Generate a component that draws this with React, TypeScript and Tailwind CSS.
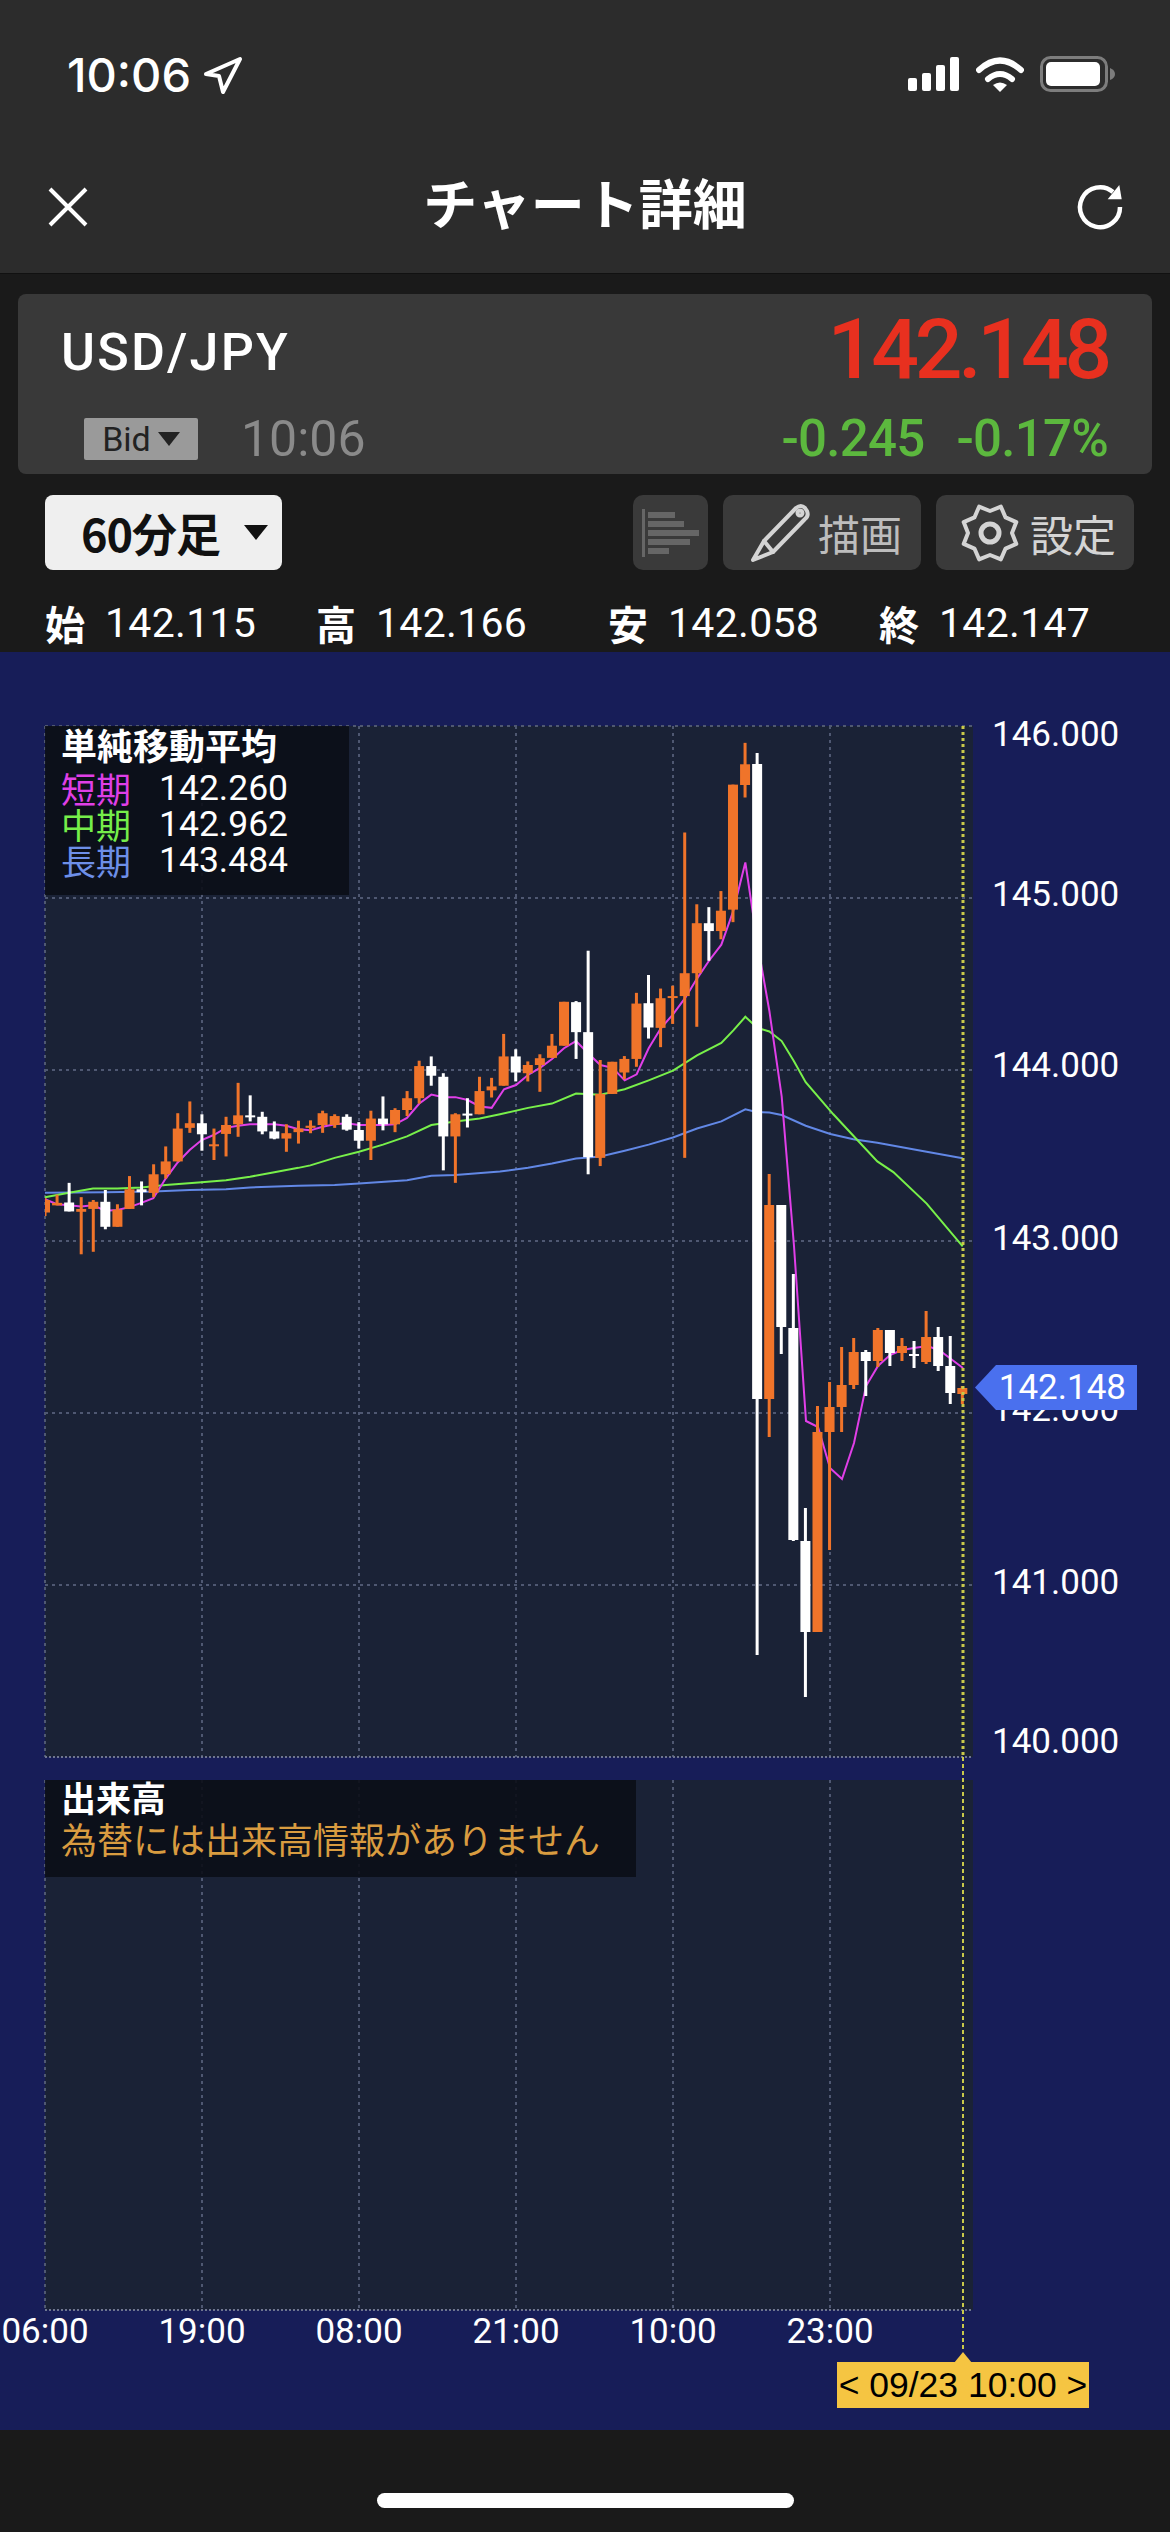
import React from 'react';

const SANS = "font-['Roboto','Noto_Sans_CJK_JP',sans-serif]";
const JP = "font-['Noto_Sans_CJK_JP',sans-serif]";

// candle data read off the chart, page coords: [white?, wickTop, bodyTop, bodyBottom, wickBottom]
type Candle = [number, number, number, number, number];
const z = (v: number) => 700 + v / 2.8;
const rawCandles: Candle[] = [
  [0, 1395, 1400, 1435, 1445], [0, 1385, 1408, 1415, 1415], [1, 1352, 1407, 1432, 1432], [0, 1392, 1425, 1433, 1552],
  [0, 1400, 1405, 1425, 1545], [1, 1372, 1405, 1475, 1482], [0, 1412, 1427, 1475, 1475], [0, 1333, 1370, 1425, 1425],
  [1, 1348, 1370, 1378, 1415], [0, 1300, 1328, 1380, 1392], [0, 1250, 1292, 1328, 1340], [0, 1157, 1200, 1292, 1292],
  [0, 1124, 1185, 1198, 1212], [1, 1160, 1185, 1216, 1262], [0, 1200, 1244, 1244, 1288], [0, 1167, 1190, 1215, 1278],
  [0, 1072, 1163, 1188, 1223], [1, 1107, 1163, 1166, 1180], [1, 1153, 1167, 1208, 1216], [1, 1180, 1208, 1228, 1230],
  [0, 1188, 1213, 1228, 1265], [0, 1178, 1200, 1210, 1242], [0, 1177, 1192, 1198, 1213], [0, 1150, 1157, 1190, 1212],
  [0, 1160, 1165, 1190, 1198], [1, 1160, 1167, 1203, 1206], [1, 1182, 1204, 1234, 1256], [0, 1150, 1172, 1234, 1288],
  [1, 1110, 1172, 1188, 1205], [0, 1143, 1148, 1188, 1210], [0, 1095, 1115, 1148, 1165], [0, 1010, 1025, 1115, 1130],
  [1, 998, 1025, 1052, 1080], [1, 1045, 1055, 1222, 1317], [0, 1157, 1160, 1222, 1352], [1, 1115, 1158, 1162, 1197],
  [0, 1055, 1095, 1160, 1160], [0, 1058, 1082, 1093, 1113], [0, 935, 998, 1080, 1080], [1, 978, 998, 1043, 1068],
  [0, 1012, 1022, 1045, 1068], [0, 992, 1003, 1022, 1097], [0, 935, 968, 1002, 1002], [0, 845, 845, 968, 968],
  [1, 843, 846, 930, 1005], [1, 702, 930, 1280, 1328], [0, 1008, 1103, 1282, 1305], [0, 1013, 1013, 1103, 1103],
  [0, 997, 1005, 1043, 1062], [0, 820, 850, 1005, 1027], [1, 770, 849, 917, 948], [0, 808, 835, 918, 972],
  [0, 800, 829, 833, 907], [0, 371, 765, 829, 1282], [0, 572, 625, 765, 915], [1, 580, 625, 647, 730],
  [0, 535, 590, 647, 670], [0, 237, 237, 587, 622], [0, 120, 180, 238, 273],
];
const candles: Candle[] = [
  ...rawCandles.map(([w, a, b, c, d]): Candle => [w, z(a), z(b), z(c), z(d)]),
  [1, 753, 764, 1399, 1655], [0, 1174, 1205, 1399, 1437], [1, 1205, 1205, 1327, 1354], [1, 1274, 1328, 1540, 1541],
  [1, 1508, 1541, 1632, 1697], [0, 1406, 1432, 1632, 1632], [0, 1382, 1407, 1432, 1550], [0, 1347, 1385, 1407, 1432],
  [0, 1338, 1352, 1385, 1389], [1, 1350, 1352, 1361, 1396], [0, 1328, 1330, 1361, 1367], [1, 1330, 1330, 1353, 1366],
  [0, 1338, 1346, 1353, 1361], [1, 1341, 1354, 1354, 1368], [0, 1311, 1337, 1362, 1364], [1, 1327, 1337, 1366, 1371],
  [1, 1336, 1366, 1393, 1404], [0, 1386, 1388, 1394, 1404],
];

const poly = (left: number[][], right: number[][], tail: number[][] = []) =>
  [
    ...left.map(([x, y]) => `${x / 3},${z(y)}`),
    ...right.map(([x, y]) => `${500 + x / 3},${z(y)}`),
    ...tail.map(([x, y]) => `${x},${y}`),
  ].join(' ');

const magenta = poly(
  [[135, 1398], [171, 1412], [207, 1415], [243, 1418], [279, 1415], [316, 1430], [352, 1428], [388, 1420], [424, 1408], [460, 1395], [497, 1340], [533, 1295], [569, 1260], [605, 1232], [641, 1218], [678, 1198], [714, 1192], [750, 1188], [787, 1188], [823, 1188], [859, 1192], [895, 1202], [931, 1205], [968, 1195], [1004, 1188], [1040, 1185], [1077, 1190], [1113, 1190], [1149, 1190], [1185, 1188], [1221, 1170], [1258, 1130], [1294, 1105], [1330, 1112], [1366, 1112], [1403, 1120], [1439, 1138], [1475, 1142]],
  [[12, 1090], [48, 1078], [84, 1050], [120, 1030], [156, 1005], [192, 975], [228, 955], [265, 990], [301, 1022], [338, 1030], [374, 1065], [410, 1048], [446, 975], [482, 920], [519, 880], [555, 835], [591, 780], [627, 730], [664, 685], [700, 590], [736, 455], [772, 680], [808, 870], [845, 1110]],
  [[794, 1246], [806, 1421], [818, 1427], [830, 1468], [842, 1479], [854, 1443], [866, 1386], [878, 1366], [890, 1355], [902, 1350], [914, 1348], [927, 1346], [939, 1350], [951, 1359], [963, 1368]],
);
const green = poly(
  [[135, 1392], [207, 1380], [279, 1368], [352, 1368], [424, 1365], [497, 1358], [605, 1350], [678, 1345], [750, 1335], [823, 1322], [895, 1310], [931, 1303], [1004, 1282], [1077, 1265], [1149, 1245], [1221, 1222], [1294, 1190], [1366, 1180], [1439, 1172]],
  [[0, 1160], [84, 1142], [156, 1130], [228, 1102], [301, 1105], [374, 1090], [446, 1065], [519, 1038], [591, 995], [664, 960], [700, 925], [736, 887], [772, 918], [808, 928], [845, 955], [881, 1010], [917, 1070], [1000, 1160], [1060, 1220], [1132, 1292], [1180, 1322], [1280, 1410], [1388, 1530]],
);
const blue = poly(
  [[135, 1380], [316, 1378], [460, 1376], [569, 1372], [678, 1370], [750, 1365], [895, 1360], [1004, 1358], [1077, 1354], [1221, 1345], [1294, 1332], [1366, 1330]],
  [[0, 1320], [84, 1310], [156, 1298], [228, 1284], [301, 1278], [374, 1262], [446, 1245], [519, 1225], [591, 1200], [664, 1180], [700, 1163], [736, 1146], [772, 1154], [808, 1155], [845, 1162], [917, 1192], [991, 1215], [1060, 1230], [1132, 1240], [1280, 1265], [1388, 1283]],
);

const gridX = [45, 202, 359, 516, 673, 830];
const gridY = [726, 898, 1070, 1241, 1413, 1585];
const axis = [
  ['146.000', 735], ['145.000', 895], ['144.000', 1066], ['143.000', 1239],
  ['142.000', 1410], ['141.000', 1583], ['140.000', 1742],
] as const;
const times = ['06:00', '19:00', '08:00', '21:00', '10:00', '23:00'];
const legend = [
  ['短期', '142.260', 'text-[#df3fe6]'],
  ['中期', '142.962', 'text-[#76ee4a]'],
  ['長期', '143.484', 'text-[#6d8fe8]'],
];
const ohlc = [
  ['始', '142.115', 'w-[271px]'],
  ['高', '142.166', 'w-[292px]'],
  ['安', '142.058', 'w-[271px]'],
  ['終', '142.147', ''],
];
const depthBars = [27, 36, 51, 42, 21];

function ChartLayer() {
  return (
    <svg className="absolute inset-0 z-10" width="1170" height="1778" viewBox="0 652 1170 1778">
      <defs>
        <clipPath id="plot">
          <rect x="45" y="726" width="928" height="1031" />
        </clipPath>
      </defs>
      <g stroke="#4f5872" strokeWidth="2" strokeDasharray="3 4" fill="none">
        {gridY.map((y) => (
          <line key={y} x1="45" x2="972" y1={y} y2={y} />
        ))}
        {gridX.map((x) => (
          <React.Fragment key={x}>
            <line x1={x} x2={x} y1="726" y2="1757" />
            <line x1={x} x2={x} y1="1780" y2="2310" />
          </React.Fragment>
        ))}
      </g>
      <g stroke="#6f7690" strokeWidth="2" strokeDasharray="2 2" fill="none">
        <line x1="45" x2="972" y1="1757" y2="1757" />
        <line x1="45" x2="972" y1="2310" y2="2310" />
      </g>
      <polyline points={blue} fill="none" stroke="#6288e6" strokeWidth="2" />
      <polyline points={green} fill="none" stroke="#78f04a" strokeWidth="2" />
      <polyline points={magenta} fill="none" stroke="#e03fe8" strokeWidth="2" />
      <g clipPath="url(#plot)">
        {candles.map(([w, top, bodyTop, bodyBottom, bottom], i) => {
          const x = 45 + i * 12.07;
          const color = w ? '#ffffff' : '#f0742a';
          return (
            <g key={i} fill={color}>
              <rect x={x - 1.5} y={top} width="3" height={bottom - top} />
              <rect x={x - 5} y={bodyTop} width="10" height={Math.max(bodyBottom - bodyTop, 2)} />
            </g>
          );
        })}
      </g>
      <line x1="963" x2="963" y1="726" y2="1757" stroke="#c9c94a" strokeWidth="3" strokeDasharray="3 3" />
      <line x1="963" x2="963" y1="1757" y2="2352" stroke="#c9c94a" strokeWidth="2" strokeDasharray="4 3" />
      <path d="M954 2363 L963 2352 L972 2363 Z" fill="#f5c542" />
    </svg>
  );
}

function Pencil() {
  return (
    <svg width="60" height="60" viewBox="0 0 60 60" fill="none" stroke="#d4d4d4" strokeWidth="4" strokeLinejoin="round" strokeLinecap="round">
      <path d="M3 57 L14 38 L46 5 Q51 1 55 5 L57 8 Q59 13 55 16 L23 49 Z" />
      <path d="M14 38 L23 49" />
      <circle cx="50" cy="10" r="2.5" />
    </svg>
  );
}

function Gear() {
  const pts: string[] = [];
  for (let i = 0; i < 16; i++) {
    const r = i % 2 === 0 ? 28.5 : 22;
    const a = ((i * 22.5 - 67.5) * Math.PI) / 180;
    pts.push(`${30 + r * Math.cos(a)},${30 + r * Math.sin(a)}`);
  }
  return (
    <svg width="60" height="60" viewBox="0 0 60 60" fill="none" stroke="#d4d4d4" strokeLinejoin="round">
      <polygon points={pts.join(' ')} strokeWidth="4" />
      <circle cx="30" cy="30" r="9" strokeWidth="5" />
    </svg>
  );
}

export default function App() {
  return (
    <div className={`w-[1170px] h-[2532px] flex flex-col overflow-hidden bg-[#1a1a1a] text-white ${SANS}`}>
      <header className="h-[274px] shrink-0 bg-[#2c2c2c] border-b border-[#111111] flex flex-col">
        {/* status bar */}
        <div className="h-[150px] flex items-start justify-between pt-[56px] pl-[67px] pr-[55px]">
          <div className="flex items-center h-[38px]">
            <span className="w-[136px] font-['Inter',sans-serif] font-medium text-[47px] leading-[38px]">10:06</span>
            <svg width="40" height="38" viewBox="0 0 40 38" fill="none" stroke="#ffffff" strokeWidth="4" strokeLinejoin="round">
              <path d="M3 18 L37 3 L20 36 L16 20 Z" />
            </svg>
          </div>
          <div className="flex items-start gap-[17px] h-[38px]">
            <svg width="51" height="36" viewBox="0 0 51 36" fill="#ffffff">
              <rect x="0" y="22" width="9" height="13" rx="2" />
              <rect x="14" y="17" width="9" height="18" rx="2" />
              <rect x="28" y="9" width="9" height="26" rx="2" />
              <rect x="42" y="1" width="9" height="34" rx="2" />
            </svg>
            <svg width="48" height="36" viewBox="0 0 48 36">
              <path d="M3 14 Q24 -5 45 14" fill="none" stroke="#ffffff" strokeWidth="6" strokeLinecap="round" />
              <path d="M12 23 Q24 13 36 23" fill="none" stroke="#ffffff" strokeWidth="6" strokeLinecap="round" />
              <path d="M17 29 Q24 24 31 29 L24 36 Z" fill="#ffffff" />
            </svg>
            <svg width="75" height="36" viewBox="0 0 75 36" className="-ml-[1px]">
              <rect x="1.5" y="1.5" width="65" height="33" rx="9" fill="none" stroke="#7d7d7d" strokeWidth="3" />
              <rect x="6" y="6" width="54" height="24" rx="5" fill="#ffffff" />
              <path d="M70 12 Q75 14 75 18 Q75 22 70 24 Z" fill="#7d7d7d" />
            </svg>
          </div>
        </div>
        {/* nav */}
        <div className="flex-1 flex items-start justify-between pl-[47px] pr-[45px]">
          <svg width="42" height="42" viewBox="0 0 42 42" className="mt-[36px]" stroke="#ffffff" strokeWidth="4">
            <path d="M3 3 L39 39 M39 3 L3 39" />
          </svg>
          <div className={`${JP} font-bold text-[54px] leading-[70px] mt-[17px] ml-[6px] text-center`}>チャート詳細</div>
          <svg width="50" height="50" viewBox="0 0 50 50" className="mt-[32px]">
            <path d="M45 25 A20 20 0 1 1 38 10" fill="none" stroke="#ffffff" strokeWidth="4.5" />
            <path d="M32.7 17.3 L46.7 17.3 L44.3 3 Z" fill="#ffffff" />
          </svg>
        </div>
      </header>

      <section className="mt-[20px] mx-[18px] h-[180px] shrink-0 bg-[#393939] rounded-[8px] flex flex-col pl-[43px] pr-[44px]">
        <div className="h-[124px] flex items-start justify-between">
          <span className="font-medium text-[52px] leading-[60px] mt-[29px] tracking-[2.2px]">USD/JPY</span>
          <span className="text-[#e8301f] font-medium text-[84px] leading-[90px] mt-[11px] tracking-[-4.2px]">142.148</span>
        </div>
        <div className="flex items-center justify-between h-[42px]">
          <div className="flex items-center">
            <div className="ml-[23px] w-[114px] h-[42px] bg-[#9a9a9a] flex items-center justify-center gap-[7px] rounded-[2px]">
              <span className="text-[#222222] text-[34px] leading-[42px]">Bid</span>
              <span className="w-0 h-0 border-x-[11px] border-x-transparent border-t-[14px] border-t-[#222222]" />
            </div>
            <span className="ml-[43px] text-[#8a8a8a] text-[50px] leading-[42px]">10:06</span>
          </div>
          <div className="flex items-center gap-[32px] text-[#5cb83e] font-medium text-[51px] leading-[42px] tracking-[-0.75px]">
            <span>-0.245</span>
            <span>-0.17%</span>
          </div>
        </div>
      </section>

      <div className="mt-[21px] h-[75px] shrink-0 flex items-stretch pl-[45px] pr-[36px]">
        <div className="w-[237px] bg-[#efefef] rounded-[8px] flex items-center text-[#111111] pl-[36px]">
          <span className={`${JP} font-bold text-[45px] leading-[60px] tracking-[-1px]`}>60分足</span>
          <span className="ml-[24px] w-0 h-0 border-x-[12px] border-x-transparent border-t-[15px] border-t-[#111111]" />
        </div>
        <div className="ml-auto w-[75px] bg-[#3a3a3a] rounded-[10px] flex items-center pl-[9px] gap-[3px]">
          <div className="w-[3px] h-[48px] bg-[#666666]" />
          <div className="flex flex-col gap-[3px]">
            {depthBars.map((w) => (
              <div key={w} className="h-[6px] bg-[#666666]" style={{ width: w }} />
            ))}
          </div>
        </div>
        <div className="ml-[15px] w-[198px] bg-[#3a3a3a] rounded-[10px] flex items-center pl-[27px] gap-[8px] text-[#bdbdbd]">
          <Pencil />
          <span className={`${JP} text-[42px] leading-[60px]`}>描画</span>
        </div>
        <div className="ml-[15px] w-[198px] bg-[#3a3a3a] rounded-[10px] flex items-center pl-[24px] gap-[10px] text-[#d4d4d4]">
          <Gear />
          <span className={`${JP} text-[43px] leading-[56px]`}>設定</span>
        </div>
      </div>

      <div className="h-[82px] shrink-0 flex items-center pl-[45px] pt-[24px]">
        {ohlc.map(([k, v, w]) => (
          <div key={k} className={`flex items-center gap-[20px] ${w}`}>
            <span className={`${JP} font-bold text-[40px] leading-[50px]`}>{k}</span>
            <span className="text-[41px] leading-[50px] tracking-[0.3px]">{v}</span>
          </div>
        ))}
      </div>

      <main className="relative h-[1778px] shrink-0 bg-[#171d58] pt-[74px] pl-[45px]">
        <div className="relative w-[928px] h-[1031px] bg-[#1a2236]">
          <div className="absolute z-20 left-0 top-0 w-[304px] h-[169px] bg-[#0b0e17]/90 pl-[16px]">
            <div className={`${JP} font-bold text-[36px] leading-[38px] -mt-[1px]`}>単純移動平均</div>
            <div className="mt-[7px] flex flex-col">
              {legend.map(([k, v, c]) => (
                <div key={k} className="flex items-center h-[36px]">
                  <span className={`${JP} ${c} text-[35px] leading-[36px] w-[98px]`}>{k}</span>
                  <span className="text-[35.5px] leading-[36px] text-white">{v}</span>
                </div>
              ))}
            </div>
          </div>
        </div>
        <div className="relative w-[928px] h-[530px] mt-[23px] bg-[#1a2236]">
          <div className="absolute z-20 left-0 top-0 w-[591px] h-[97px] bg-[#0b0e17]/90 pl-[16px]">
            <div className={`${JP} font-bold text-[35px] leading-[38px] -mt-[2px]`}>出来高</div>
            <div className={`${JP} text-[36px] leading-[44px] text-[#d99c40]`}>為替には出来高情報がありません</div>
          </div>
        </div>
        <ChartLayer />
        {/* axis labels sit at data positions */}
        {axis.map(([t, y]) => (
          <span key={t} className="absolute z-20 left-[992px] text-[35px] leading-[40px]" style={{ top: y - 652 - 20 }}>
            {t}
          </span>
        ))}
        <div className="absolute z-30 left-[975px] top-[713px] w-[162px] h-[45px] bg-[#4a70ee] [clip-path:polygon(0_50%,21px_0,100%_0,100%_100%,21px_100%)] flex items-center justify-end pr-[11px] text-[35px] leading-[45px]">
          142.148
        </div>
        {times.map((t, i) => (
          <span key={t} className="absolute z-20 -translate-x-1/2 text-[35px] leading-[40px] top-[1660px]" style={{ left: gridX[i] }}>
            {t}
          </span>
        ))}
        <div className="absolute z-20 left-[837px] top-[1710px] w-[252px] h-[46px] bg-[#f5c542] text-black font-['Liberation_Sans',sans-serif] text-[35.5px] leading-[46px] text-center whitespace-nowrap">
          {'< 09/23 10:00 >'}
        </div>
      </main>

      <footer className="flex-1 flex justify-center pt-[63px]">
        <div className="w-[417px] h-[15px] bg-white rounded-full" />
      </footer>
    </div>
  );
}
